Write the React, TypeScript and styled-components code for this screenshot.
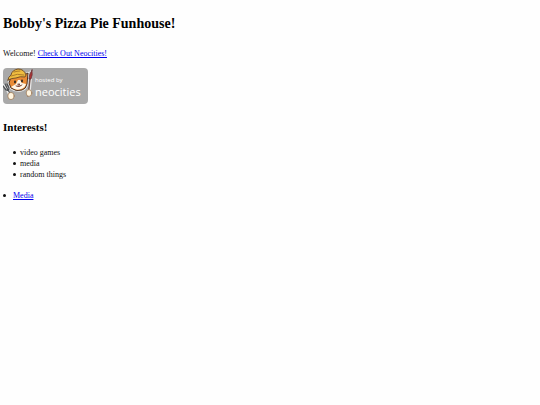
import React from 'react';
import styled, { createGlobalStyle } from 'styled-components';

const GlobalStyle = createGlobalStyle`
  body {
    margin: 0;
    background: #fefefe;
    color: #111;
    font-family: "Liberation Serif", "Times New Roman", serif;
    font-size: 8px;
    line-height: 11px;
  }
`;

const Page = styled.main`
  padding: 14px 3px;
`;

const Title = styled.h1`
  margin: 0 0 14px;
  font-size: 14px;
  line-height: 20px;
  color: #000;
`;

const Heading = styled.h2`
  margin: 0 0 12px;
  font-size: 11px;
  line-height: 16px;
  color: #000;
`;

const Intro = styled.p`
  margin: 0 0 9px;
`;

const Link = styled.a`
  color: #0000ee;
  text-decoration: underline;
`;

const BadgeLink = styled.a`
  display: block;
  width: 85px;
  margin-bottom: 15px;

  svg {
    display: block;
  }
`;

const List = styled.ul<{ $outer?: boolean }>`
  margin: 0 0 10px;
  padding: 0;
  list-style: none;

  li {
    display: flex;
    align-items: center;
    gap: ${({ $outer }) => ($outer ? 7 : 4)}px;
    padding-left: ${({ $outer }) => ($outer ? 0 : 10)}px;
  }

  li::before {
    content: "";
    width: 3px;
    height: 3px;
    border-radius: 50%;
    background: #111;
  }
`;

const HostBadge = () => (
  <svg width="85" height="36" viewBox="0 0 85 36" role="img" aria-label="Hosted by Neocities">
    <rect width="85" height="36" rx="4" fill="#a9a9a9" />
    <g strokeLinecap="round" strokeLinejoin="round">
      <path d="M1 17l3 4 2-1M4 21l4 8" fill="none" stroke="#e8e8e8" strokeWidth="3" />
      <path d="M28 4l-2 22" stroke="#e8e8e8" strokeWidth="3" />
      <path
        d="M8 9l-2 6 2 5q5 4 11 2 4-1 5-6l1-11-4 2-7-1z"
        fill="#e98b35"
        stroke="#e8e8e8"
        strokeWidth="2.4"
      />
      <path
        d="M8 9l-2 6 2 5q5 4 11 2 4-1 5-6l1-11-4 2-7-1z"
        fill="#e98b35"
        stroke="#4b3324"
        strokeWidth="1"
      />
      <path d="M15 12l-2 4-5 3q5 4 10 2 4-1 5-5l-4-1-2-3z" fill="#fff7e9" />
      <path
        d="M5 12Q5 9 8 7q1-5 7-6 6 0 8 6l-1 2q-5-1-9 1-4 0-8 2z"
        fill="#efbd3f"
        stroke="#775226"
        strokeWidth="1"
      />
      <path d="M8 8q6-3 13-1M11 4q3-1 6-1" fill="none" stroke="#ad7b29" strokeWidth="1" />
      <ellipse cx="12" cy="14" rx="1" ry="1.4" fill="#302822" />
      <ellipse cx="19" cy="13" rx="1" ry="1.4" fill="#302822" />
      <path d="M15 16h2l-1 1zM13 18q3 2 6-1" fill="#a54c3c" stroke="#6c4033" strokeWidth=".8" />
      <path
        d="M0 18l3 4q3 1 3-2l-2-4M2 16l3 6 5 8"
        fill="none"
        stroke="#4c4f52"
        strokeWidth="1.3"
      />
      <path d="M27 11l-2 17" stroke="#725044" strokeWidth="1.5" />
      <path d="M29 2q1 5-1 9h-2q0-5 3-9z" fill="#ac3435" stroke="#633033" strokeWidth=".8" />
      <ellipse cx="8" cy="28" rx="3.2" ry="3.6" fill="#fff4df" stroke="#96704b" strokeWidth=".7" />
      <ellipse cx="26" cy="25" rx="2.8" ry="3.4" fill="#fff4df" stroke="#96704b" strokeWidth=".7" />
    </g>
    <g fill="#fff" fontFamily="'Open Sans', 'Noto Sans', sans-serif">
      <text x="32" y="14" fontSize="6">hosted by</text>
      <text x="32" y="28" fontSize="11">neocities</text>
    </g>
  </svg>
);

export default function App() {
  return (
    <>
      <GlobalStyle />
      <Page>
        <Title>Bobby's Pizza Pie Funhouse!</Title>
        <Intro>
          Welcome! <Link href="https://neocities.org">Check Out Neocities!</Link>
        </Intro>
        <BadgeLink href="https://neocities.org">
          <HostBadge />
        </BadgeLink>
        <Heading>Interests!</Heading>
        <List>
          <li>video games</li>
          <li>media</li>
          <li>random things</li>
        </List>
        <List $outer>
          <li>
            <Link href="#media">Media</Link>
          </li>
        </List>
      </Page>
    </>
  );
}
